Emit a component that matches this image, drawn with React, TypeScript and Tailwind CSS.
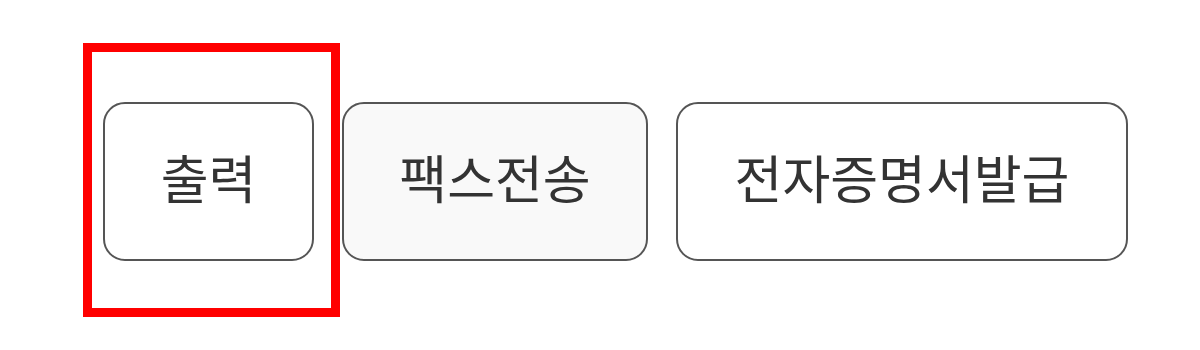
import React from "react";

const buttons = [
  { label: "출력", bg: "bg-white", w: "w-[211px]" },
  { label: "팩스전송", bg: "bg-[#f9f9f9]", w: "w-[306px]" },
  { label: "전자증명서발급", bg: "bg-white", w: "w-[452px]" },
];

export default function App() {
  return (
    <main className="min-h-[350px] w-[1200px] bg-white font-['Noto_Sans_CJK_KR','Noto_Sans',sans-serif]">
      <div className="relative pl-[103px] pt-[102px]">
        {/* highlight box round the first button */}
        <div className="pointer-events-none absolute left-[83px] top-[43px] h-[274px] w-[257px] border-[9px] border-[#ff0000]" />

        <div className="flex gap-[28px]">
          {buttons.map(b => (
            <button
              key={b.label}
              className={`${b.w} ${b.bg} flex h-[159px] items-center justify-center rounded-[22px] border-2 border-[#555555] pb-[10px] text-[52px] leading-none text-[#333333]`}
            >
              {b.label}
            </button>
          ))}
        </div>
      </div>
    </main>
  );
}
